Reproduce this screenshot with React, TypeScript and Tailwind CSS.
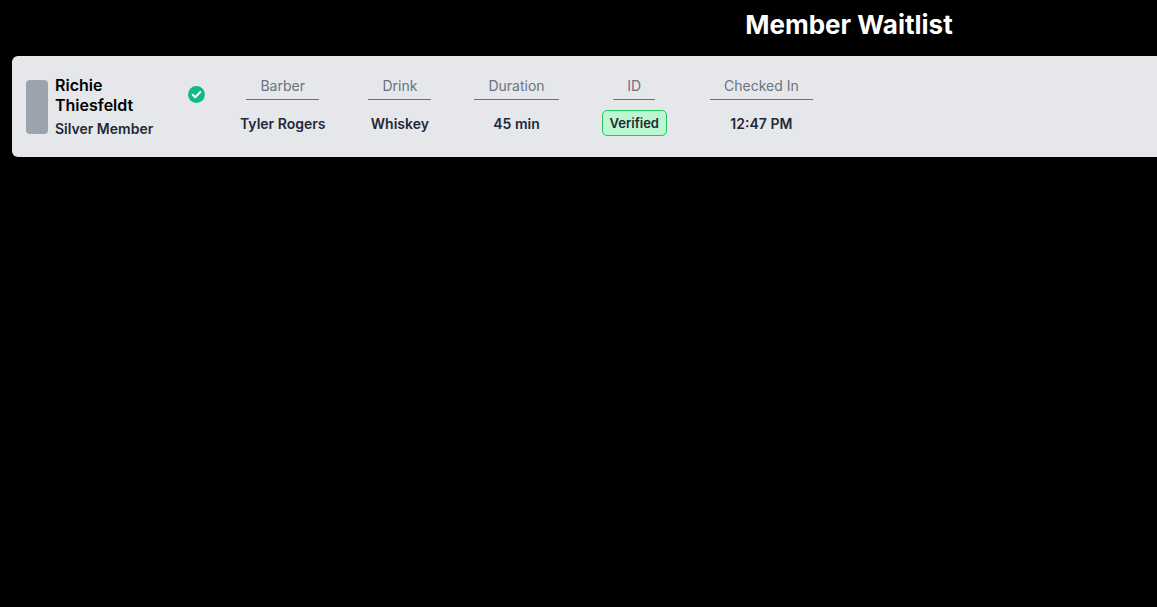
export default function App() {
  const cols: [string, React.ReactNode][] = [
    ["Barber", "Tyler Rogers"],
    ["Drink", "Whiskey"],
    ["Duration", "45 min"],
    ["ID", <span className="block rounded-[5px] border border-[#22c55e] bg-[#bbf7d0] px-[7px] py-[4px] text-[13px] font-semibold text-[#1f2937] leading-[16px]">Verified</span>],
    ["Checked In", "12:47 PM"],
  ];
  return (
    <div className="min-h-screen bg-black overflow-hidden" style={{ fontFamily: "Inter, 'Noto Sans', sans-serif" }}>
      <div className="w-[1698px]">
        <h1 className="text-center text-[26px] font-bold text-white leading-[32px] pt-[9px]">Member Waitlist</h1>
        <div className="mx-[12px] mt-[15px] h-[101px] rounded-[6px] bg-[#e5e7eb] flex items-center pl-[14px]">
          <div className="w-[22px] h-[54px] rounded-[4px] bg-[#9ca3af]" />
          <div className="ml-[7px] w-[150px]">
            <div className="flex items-center gap-[4px] text-[16px] font-semibold text-black leading-[20px]">
              Richie Thiesfeldt
              <svg width="17" height="17" viewBox="0 0 20 20"><circle cx="10" cy="10" r="10" fill="#10b981" /><path d="M5.5 10.3l3 3 6-6.3" stroke="white" strokeWidth="2.4" fill="none" strokeLinecap="round" strokeLinejoin="round" /></svg>
            </div>
            <div className="mt-[3px] text-[14px] font-semibold text-[#1f2937]">Silver Member</div>
          </div>
          <div className="ml-[35px] flex gap-[43px]">
            {cols.map(([h, v]) => (
              <div key={h} className="flex flex-col items-center">
                <div className="px-[14px] pb-[4px] border-b border-[#6b7280] text-[14px] text-[#6b7280] leading-[18px]">{h}</div>
                <div className="mt-[10px] h-[26px] flex items-center text-[14px] font-semibold text-[#1f2937]">{v}</div>
              </div>
            ))}
          </div>
        </div>
      </div>
    </div>
  );
}
